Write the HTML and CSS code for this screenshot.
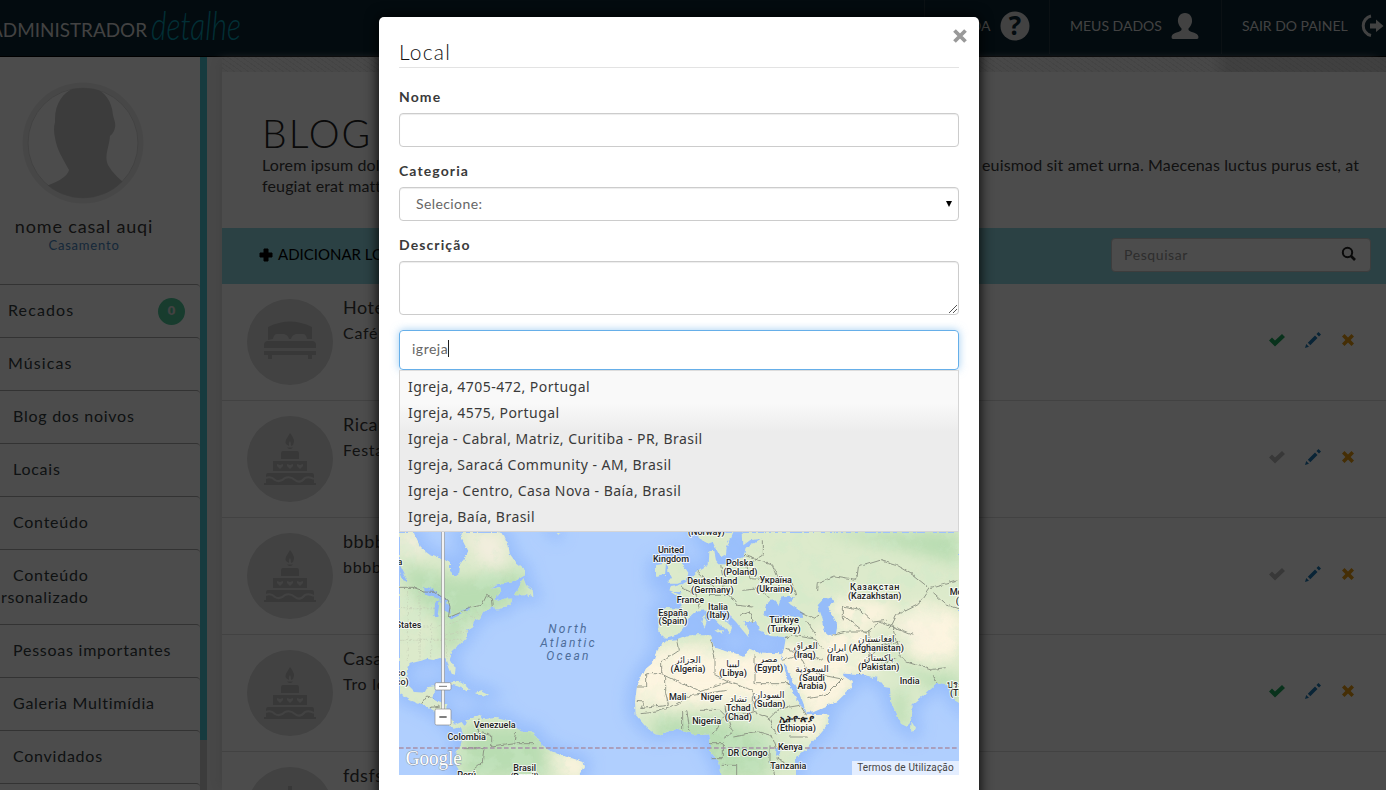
FILE: index.html
```html
<!DOCTYPE html>
<html lang="pt">
<head>
<meta charset="utf-8">
<title>Administrador</title>
<link rel="stylesheet" href="styles.css">
</head>
<body>
<svg width="0" height="0" class="defs">
  <symbol id="bed" viewBox="0 0 54 40"><path d="M5 20V7Q27-4 49 7V19H44Q43 14 40 14H33Q29 15 28 19H26Q25 15 21 14H14Q11 14 10 19ZM1 28V25Q1 21 5 21H49Q53 21 53 25V28ZM1 31H53V35H49V39H45V35H9V39H5V35H1Z"/></symbol>
  <symbol id="cake" viewBox="0 0 54 54"><path d="M27 2Q33 9 30 14L28 15Q28 11 27 10Q25 12 26 15Q20 12 24 7ZM24 16.500H30L28 18H26ZM18 28V22Q18 20 20 20H34Q36 20 36 22V28ZM10 40V30H44V40Z"/><path d="M3 52V44Q3 42 5 42H49Q51 42 51 44V52H53V54H1V52Z"/><g class="icing"><path d="M14 33l3 1 3-1v2l-3 3-3-3zM24 33l3 1 3-1v2l-3 3-3-3zM34 33l3 1 3-1v2l-3 3-3-3z"/><path class="wave" d="M3 47Q8 45 12 49Q17 52 22 47Q27 45 32 49Q37 53 42 47Q46 45 51 48"/></g></symbol>
  <symbol id="cross" viewBox="0 0 54 54"><path d="M25 4h4v4h5v3h-5v8h-4v-8h-5V8h5zM10 52V30l17-14 17 14v22z"/></symbol>
  <symbol id="ok" viewBox="0 0 16 16"><path d="M0 8.500L3 5.500L6 8.500L13 2L16 5L6 14.500Z"/></symbol>
  <symbol id="pen" viewBox="0 0 16 16"><path d="M0 16L1.200 12L4 14.800ZM2.800 10.700L10 3.500L12.500 6L5.300 13.200ZM11.500 2L13.500 0L16 2.500L14 4.500Z"/></symbol>
  <symbol id="del" viewBox="0 0 14 14"><path d="M3.500 1L7 4.400L10.500 1L13 3.500L9.600 7L13 10.500L10.500 13L7 9.600L3.500 13L1 10.500L4.400 7L1 3.500Z"/></symbol>
</svg>
<div class="page">
  <header class="top">
    <svg class="logo" width="260" height="56"><text class="brand" x="-10" y="37" textLength="157" lengthAdjust="spacingAndGlyphs">ADMINISTRADOR</text><text class="script" x="151" y="40" textLength="90" lengthAdjust="spacingAndGlyphs">detalhe</text></svg>
    <nav class="topnav">
      <a class="help"><span>AJUDA</span><svg width="30" height="30" viewBox="0 0 30 30"><circle cx="15" cy="15" r="14.500"/><text class="question" x="15" y="24" text-anchor="middle">?</text></svg></a>
      <a class="user"><span>MEUS DADOS</span><svg width="28" height="28" viewBox="0 0 28 28"><path d="M14 1C9 1 6.500 5 7 10C7.500 13 9 15 10.500 16.500V18C8 21 1 20 .5 25Q.5 27 2 27H26Q27.500 27 27.500 25C27 20 20 21 17.500 18V16.500C19 15 20.500 13 21 10C21.500 5 19 1 14 1Z"/></svg></a>
      <a class="exit"><span>SAIR DO PAINEL</span><svg width="26" height="24" viewBox="0 0 26 24"><path class="arc" d="M13 2A10 10 0 0 0 13 21.500"/><path d="M12 9.500H18V5.500L25.500 12L18 18V14.500H12Z"/></svg></a>
    </nav>
  </header>
  <div class="body">
    <aside class="side">
      <div class="profile">
        <svg width="122" height="122" viewBox="0 0 122 122"><circle cx="61" cy="61" r="60.500" fill="#efefef"/><circle cx="61" cy="61" r="55" fill="#fff" stroke="#ddd"/><clipPath id="face"><circle cx="61" cy="61" r="55"/></clipPath><path clip-path="url(#face)" fill="#cacaca" d="M33 40C31 -5 88-8 91 33C92 38 95 42 92 49Q90 53 88 54C87 66 82 74 86 83Q92 94 110 107V122H15V107Q45 98 47 88C40 75 35 68 33 56Q31 47 33 40Z"/></svg>
        <div class="couple">nome casal auqi</div><div class="type">Casamento</div>
      </div>
      <ul class="menu">
        <li class="near">Recados<b class="badge">0</b></li><li class="near">Músicas</li><li>Blog dos noivos</li><li>Locais</li><li>Conteúdo</li><li class="double">Conteúdo<br>personalizado</li><li>Pessoas importantes</li><li>Galeria Multimídia</li><li>Convidados</li><li></li>
      </ul>
    </aside>
    <div class="rail"><div class="thumb"></div></div>
    <main class="main">
      <div class="strip"></div>
      <section class="intro"><h1>BLOG</h1><div class="lead"><span>Lorem ipsum dolor</span><span class="tail">euismod sit amet urna. Maecenas luctus purus est, at</span></div><div class="lead">feugiat erat mattis</div></section>
      <div class="bar"><svg width="14" height="14" viewBox="0 0 14 14"><path d="M5 1H9V5H13V9H9V13H5V9H1V5H5Z" stroke="#000"/></svg><span class="add">ADICIONAR LOCAL</span><div class="search"><span>Pesquisar</span><svg width="16" height="16" viewBox="0 0 16 16"><circle cx="6.500" cy="6.500" r="4.700" fill="none" stroke="#222" stroke-width="2"/><path d="M10 10L14 14" stroke="#222" stroke-width="2.600"/></svg></div></div>
      <article class="row"><div class="disc"><svg class="bed"><use href="#bed"/></svg></div><div class="info"><h3>Hotel</h3><p>Café</p></div><div class="acts"><svg class="ok on"><use href="#ok"/></svg><svg class="pen"><use href="#pen"/></svg><svg class="del"><use href="#del"/></svg></div></article>
      <article class="row"><div class="disc"><svg class="cake"><use href="#cake"/></svg></div><div class="info"><h3>Ricardo</h3><p>Festa</p></div><div class="acts"><svg class="ok"><use href="#ok"/></svg><svg class="pen"><use href="#pen"/></svg><svg class="del"><use href="#del"/></svg></div></article>
      <article class="row"><div class="disc"><svg class="cake"><use href="#cake"/></svg></div><div class="info"><h3>bbbbb</h3><p>bbbbb</p></div><div class="acts"><svg class="ok"><use href="#ok"/></svg><svg class="pen"><use href="#pen"/></svg><svg class="del"><use href="#del"/></svg></div></article>
      <article class="row"><div class="disc"><svg class="cake"><use href="#cake"/></svg></div><div class="info"><h3>Casa</h3><p>Tro lo</p></div><div class="acts"><svg class="ok on"><use href="#ok"/></svg><svg class="pen"><use href="#pen"/></svg><svg class="del"><use href="#del"/></svg></div></article>
      <article class="row"><div class="disc"><svg class="cake"><use href="#cross"/></svg></div><div class="info"><h3>fdsfs</h3></div></article>
    </main>
  </div>
</div>
<div class="backdrop">
  <div class="modal">
    <svg class="close" width="14" height="14" viewBox="0 0 14 14"><path d="M1.500 1.500L12.500 12.500M12.500 1.500L1.500 12.500"/></svg>
    <h2>Local</h2>
    <label>Nome</label><div class="field"></div>
    <label>Categoria</label><div class="field select"><span>Selecione:</span><svg width="6" height="6" viewBox="0 0 6 6"><path d="M0 0H6L3 6Z"/></svg></div>
    <label>Descrição</label><div class="field area"><svg width="8" height="8" viewBox="0 0 8 8"><path d="M0 8L8 0M4 8L8 4" stroke="#555" stroke-width="1"/></svg></div>
    <div class="field focus"><span>igreja</span><i class="caret"></i></div>
    <ul class="options"><li>Igreja, 4705-472, Portugal</li><li>Igreja, 4575, Portugal</li><li>Igreja - Cabral, Matriz, Curitiba - PR, Brasil</li><li>Igreja, Saracá Community - AM, Brasil</li><li>Igreja - Centro, Casa Nova - Baía, Brasil</li><li>Igreja, Baía, Brasil</li></ul>
    <div class="map">
    <svg width="560" height="243" viewBox="0 3 1680 729">
      <defs>
        <path id="land" d="M0 3H45L50 20 65 50 85 65 110 75 150 90V120L165 135 178 125 180 100 195 80 205 60 195 40 185 20V3H295L312 10 325 40 330 70 345 90 375 115V130L340 150 290 160 270 172 300 165 304 180 280 205 300 210 312 200 340 200 335 215 300 235 285 235 283 225 250 240 240 262 220 270V285L205 295 200 320 180 340 160 355 150 380 167 410 165 428 155 425 145 400 140 382 120 378 100 384 80 380 60 388 30 395 22 420 25 460 45 480 75 482 85 465 108 462 105 480 95 500 120 512 142 520 142 550 165 578 185 570 195 585 203 565 240 548 250 562 290 558 330 568 345 590 370 600 405 602 425 640 450 655 490 672 520 680 550 690 555 705 540 732H190L165 695 170 660 183 640 190 610 182 585 165 590 150 585 120 548 90 530 60 515 30 505 0 485ZM345 190L360 160 370 138 378 160 398 175 400 195 380 190ZM138 458Q180 435 212 475L200 478Q170 455 138 458ZM228 483L245 478 267 488 250 494ZM470 3L485 3 475 8ZM893 3L903 25 923 35 938 30 948 50 963 78 978 70 980 45 990 28 1000 3ZM1028 3L1030 40 1050 25 1087 20 1040 50 1033 75 1008 85 983 97 958 97 948 85 943 60 928 60 926 100 893 120 873 140 843 160 813 165 808 175 843 190 845 233 783 230 776 240 775 300 798 320 833 310 850 290 860 265 888 240 913 235 933 250 960 277 988 300 983 312 993 300 996 285 970 260 950 230 963 225 988 250 1008 270 1028 295 1045 315 1050 300 1033 270 1075 270 1080 298 1110 312 1158 315 1153 345 1145 380 1158 402 1193 470 1220 543 1243 540 1313 510 1358 465 1358 450 1330 432 1328 420 1303 415 1278 385 1265 378 1275 395 1313 422 1383 430 1433 440 1453 465 1470 468 1473 510 1503 575 1523 585 1535 560 1538 520 1575 490 1613 455 1643 460 1663 500 1680 520V3ZM798 328L833 325 873 310 933 310 940 345 983 360 1033 375 1048 350 1083 365 1148 367 1153 410 1173 470 1193 505 1222 550 1288 548 1283 580 1223 650 1188 680V732H965L958 690 933 660V640L928 607 883 610 833 590 783 610 763 605 738 585 707 548 705 510 711 465 738 410 765 388 775 350ZM803 90L828 65 848 100 865 125 858 145 833 155 803 155 816 140 805 120ZM768 100L798 94 795 128 768 135ZM1535 570L1548 590 1542 602 1533 595ZM812 180L845 180 835 195ZM946 295L972 295 967 308ZM913 250L920 270 913 290 907 270Z"/>
        <clipPath id="landclip"><use href="#land"/></clipPath>
        <filter id="soft" x="-20%" y="-20%" width="140%" height="140%"><feGaussianBlur stdDeviation="22"/></filter>
        <filter id="fray" x="0" y="0" width="100%" height="100%"><feTurbulence baseFrequency=".045" numOctaves="4" seed="4"/><feDisplacementMap in="SourceGraphic" scale="10" xChannelSelector="R" yChannelSelector="G"/></filter>
        <filter id="mottle" x="0" y="0" width="100%" height="100%"><feTurbulence type="fractalNoise" baseFrequency=".018" numOctaves="5" seed="8"/><feColorMatrix values="0 0 0 0 .62  0 0 0 0 .83  0 0 0 0 .60  0 6 0 0 -3"/></filter>
      </defs>
      <rect width="1680" height="740" fill="#b0cffe"/>
      <use href="#land" fill="#93bafb" stroke="#93bafb" stroke-width="42" filter="url(#soft)" opacity=".8"/>
      <g filter="url(#fray)">
        <g clip-path="url(#landclip)">
          <rect width="1680" height="740" fill="#dceacb"/>
          <g filter="url(#soft)">
            <path fill="#b9ddb2" d="M0 90L180 140 380 110 380 200 160 300 40 200ZM120 300H190V350H120ZM190 580H440V740H180ZM760 560H930L1110 610V740H930L760 630ZM1250 0H1680V100L1500 50ZM1450 370L1600 430 1680 430V530ZM1480 480H1520V590H1480Z"/>
            <path fill="#fdf4df" d="M700 400L800 350 1130 365 1170 500 1080 510 700 520ZM1130 330L1250 370 1320 400 1370 470 1240 560ZM1230 290L1400 290 1430 440 1300 400ZM1480 260L1560 220 1680 250V370L1560 390ZM1170 560L1290 545 1220 660ZM1290 205L1480 210 1460 280 1320 280ZM460 670H560V740H500Z"/>
            <path fill="#f3eede" d="M0 3H60L80 75 0 60ZM190 0H310L320 110 250 100ZM1500 270L1620 280 1600 350 1520 320Z"/>
          </g>
          <rect width="1680" height="740" filter="url(#mottle)" opacity=".3"/>
          <path fill="#fdf5e1" opacity=".65" filter="url(#soft)" d="M720 400L800 350 1130 370 1170 500 720 510ZM1140 340L1250 380 1360 460 1230 540ZM1490 260L1580 230 1680 260V350L1560 380Z"/>
          <path fill="#95bcf9" d="M75 165L110 180 145 205 135 215 110 198 78 188ZM103 255L105 215 122 208 115 255ZM126 208L150 220 152 245 132 235ZM145 257L180 242 185 248 155 262ZM180 237L210 228 208 236ZM0 100L25 150 10 145 0 120ZM1093 250L1103 215 1123 205 1138 222 1148 195 1188 195 1168 215 1213 245 1208 258 1158 255 1123 264ZM1253 220L1273 198 1298 200 1303 213 1283 225 1298 250 1313 280 1308 307 1283 310 1273 290 1268 260ZM1130 650L1142 650 1138 675 1128 670Z"/>
        </g>
        <path class="border" d="M0 169H42L75 180 105 181 145 205 150 225 145 257 185 240 210 228 245 220 260 190 277 200 280 225M65 515L80 495 100 500M90 530L120 525M190 650L255 650 250 690 220 715M240 560L235 600 275 610 275 645 310 640 345 635 350 600M350 635H405M783 245L850 252M843 165L890 190 900 230M893 120L955 180 975 160 965 100M930 190H990L1015 220 1060 225M1035 70L1090 90 1120 100 1135 140 1180 155 1190 190M1090 25V70L1040 100 1050 140 1130 145M1030 175L1080 170 1110 200M1020 250L1050 240 1060 270M1158 320L1180 310 1240 320 1270 350M1200 240L1240 260 1260 250M1220 270L1250 310M1155 350L1210 370 1270 385M1150 385L1200 370 1220 410 1270 430 1320 440M1225 500L1280 490 1330 440M1300 310L1340 300 1410 300V380L1380 430M1400 380L1450 340 1500 330M1253 180L1255 155 1305 135 1370 145 1375 105 1440 85 1490 100 1540 130 1590 170 1560 215 1490 250 1470 290M1330 265V225L1380 235 1420 270 1460 265M1330 250L1400 305 1440 270 1540 310M1480 280L1500 370 1520 390 1600 415 1640 410M1440 400L1490 380M1590 170L1680 145M1600 185L1640 220 1680 230M1600 430L1610 455M833 325L838 355 785 390V425L900 480 985 450 1060 475M933 325L945 380V430L985 450M1065 370V455H1170M711 465H740V425H785M797 430V485L805 520 725 530 735 510 710 508M725 545L770 540 830 520 880 490 983 475M1060 475V540L980 560 975 520M860 535L870 600M848 540V600M900 535L960 535 975 550 940 610M975 530L1000 600 970 620M1000 615L1080 600 1115 610 1130 650M1060 540L1110 560 1130 610M1110 560L1140 530 1200 520 1220 550M1170 615H1225M930 635H970V680L935 680M965 700H1010V732M1110 640V690L1125 732M1130 680L1190 710"/>
        <path class="states" d="M0 230H110M0 285H90M0 325H190M25 180V390M60 180V385M95 280V380M130 280L145 380M100 290L200 260M120 310L205 300M190 235L230 265M215 225L245 255"/>
      </g>
      <path d="M0 651H1680" class="equator"/>
      <g class="labels">
        <text x="10" y="102" text-anchor="end">ada</text><text x="67" y="291" text-anchor="end">United States</text><text x="20" y="435" text-anchor="end">México</text><text x="29" y="462" text-anchor="end">(Mexico)</text><text x="287" y="590">Venezuela</text><text x="203" y="627">Colombia</text><text x="377" y="720">Brasil</text><text x="377" y="747">(Brazil)</text><text x="203" y="740">Perú</text>
        <text x="922" y="13">(Norway)</text><text x="816" y="66">United</text><text x="816" y="93">Kingdom</text><text x="1022" y="105">Polska</text><text x="1024" y="132">(Poland)</text><text x="940" y="159">Deutschland</text><text x="940" y="186">(Germany)</text><text x="1130" y="156">Україна</text><text x="1127" y="183">(Ukraine)</text><text x="874" y="216">France</text><text x="957" y="236">Italia</text><text x="957" y="261">(Italy)</text><text x="822" y="255">España</text><text x="822" y="279">(Spain)</text><text x="1155" y="276">Türkiye</text><text x="1155" y="303">(Turkey)</text><text x="1427" y="178" textLength="148">Қазақстан</text><text x="1427" y="204">(Kazakhstan)</text><text x="1652" y="192" text-anchor="start">Монгол</text><text x="1670" y="219" text-anchor="start">(Mongolia)</text>
        <text x="867" y="395" textLength="76">الجزائر</text><text x="867" y="422">(Algeria)</text><text x="1002" y="407">ليبيا</text><text x="1002" y="435">(Libya)</text><text x="1109" y="393">مصر</text><text x="1109" y="420">(Egypt)</text><text x="1220" y="354">العراق</text><text x="1217" y="381">(Iraq)</text><text x="1313" y="361">ايران</text><text x="1316" y="389">(Iran)</text><text x="1432" y="334">افغانستان</text><text x="1432" y="360">(Afghanistan)</text><text x="1439" y="390">پاکستان</text><text x="1439" y="416">(Pakistan)</text><text x="1239" y="422">السعودية</text><text x="1239" y="450">(Saudi</text><text x="1239" y="474">Arabia)</text><text x="1532" y="459">India</text><text x="1643" y="472" text-anchor="start">ประเทศ</text><text x="1653" y="496" text-anchor="start">(Thailand)</text>
        <text x="836" y="507">Mali</text><text x="938" y="507">Niger</text><text x="1018" y="513">تشاد</text><text x="1018" y="540">Tchad</text><text x="1018" y="567">(Chad)</text><text x="1110" y="501">السودان</text><text x="1112" y="528">(Sudan)</text><text x="923" y="579">Nigeria</text><text class="ethiopic" x="1192" y="573" textLength="104" lengthAdjust="spacingAndGlyphs">ኢትዮጵያ</text><text x="1192" y="600">(Ethiopia)</text><text x="1174" y="657">Kenya</text><text x="1046" y="675">DR Congo</text><text x="1168" y="714">Tanzania</text>
      </g>
      <g class="ocean"><text x="505" y="306" textLength="114">North</text><text x="505" y="348" textLength="163">Atlantic</text><text x="505" y="388" textLength="127">Ocean</text></g>
      <text class="google" x="20" y="701" textLength="168" lengthAdjust="spacingAndGlyphs">Google</text>
      <g class="zoomer"><path d="M128 0H136V540H128Z"/><rect x="108" y="455" width="48" height="22" rx="4"/><rect x="108" y="534" width="48" height="48" rx="5"/><path class="thin" d="M120 466H144"/><path class="dash" d="M121 558H143"/></g>
    </svg>
    <span class="terms">Termos de Utilização</span>
    </div>
  </div>
</div>
</body>
</html>
```
FILE: styles.css
```css
* { box-sizing: border-box; }
body { margin: 0; width: 1386px; height: 790px; overflow: hidden; font: 16px/21px Lato, "Open Sans", sans-serif; color: #3a3a3a; }
h1, h2, h3, p, ul { margin: 0; padding: 0; font-weight: 400; list-style: none; }
svg { display: block; flex: none; }
.defs { position: absolute; }
.page { height: 790px; overflow: hidden; background: #f0f0f0; }
.top { display: flex; justify-content: space-between; height: 57px; background: #0a2532; border-bottom: 1px solid #000; }
.brand { font: 20px Lato; fill: #ddd; }
.script { font: italic 300 40px Lato; fill: #079db4; }
.topnav { display: flex; font-size: 14px; color: #ddd; }
.topnav a { display: flex; align-items: center; height: 54px; border-left: 1px solid #253a43; padding-left: 20px; }
.topnav span { margin-top: -4px; white-space: nowrap; }
.topnav svg { fill: #ddd; margin-top: -2px; }
.help { width: 125px; }
.help span { width: 45px; text-align: right; margin-right: 10px; }
.user { width: 172px; }
.user span { width: 91px; margin-right: 10px; }
.exit { width: 165px; }
.exit span { width: 105px; margin-right: 11px; }
.exit svg { margin-left: 0; }
.arc { fill: none; stroke: #ddd; stroke-width: 3; }
.question { font: bold 26px "Open Sans"; fill: #0a2532; }
.body { display: flex; height: 733px; }
.side { width: 200px; background: #fff; overflow: hidden; }
.profile { height: 227px; padding-top: 25px; text-align: center; }
.profile svg { margin-left: 22px; }
.couple { font-size: 18px; line-height: 24px; margin-top: 10px; letter-spacing: .85px; width: 168px; }
.type { color: #4a86c0; font-size: 13px; line-height: 14px; width: 168px; letter-spacing: .8px; }
.menu li { height: 53px; border-top: 1px solid #aaa; border-top-right-radius: 4px; padding: 14px 15px 0 13px; line-height: 22px; letter-spacing: .75px; color: #343c40; display: flex; justify-content: space-between; white-space: nowrap; }
.menu .near { padding-left: 8px; }
.menu .near { letter-spacing: 1.1px; }
.menu .double { display: block; height: 75px; padding-left: 0; margin-left: -18px; text-indent: 31px; }
.badge { width: 27px; height: 27px; margin-top: -1px; border-radius: 50%; background: #51c99c; color: #ddd; text-align: center; letter-spacing: 0; font: bold 12px/27px "DejaVu Sans"; }
.rail { width: 7px; background: #c8c8c8; }
.thumb { height: 683px; background: #4dc5d2; }
.main { flex: 1; margin-left: 15px; background: #fff; box-shadow: -6px 0 10px -4px #ddd; }
.strip { height: 15px; background: repeating-linear-gradient(35deg, #0000 0 3px, #0000000c 3px 4px), linear-gradient(90deg, #f0f0f0 990px, #d8d8d8 1005px); }
.intro { height: 156px; padding: 40px 0 0 40px; }
h1 { font-size: 39px; line-height: 42px; letter-spacing: 2px; font-weight: 300; color: #222; }
.lead { display: grid; grid-template-columns: 720px auto; white-space: nowrap; letter-spacing: .14px; }
.bar { height: 56px; background: #8fd9e3; display: flex; align-items: center; padding: 0 15px 3px 37px; color: #000; }
.add { font-size: 15px; margin-left: 5px; }
.search { margin-left: auto; width: 260px; height: 34px; border: 1px solid #ccc; border-radius: 4px; background: #fff; display: flex; align-items: center; justify-content: space-between; padding: 0 13px 1px 12px; font-size: 14px; color: #999; letter-spacing: .6px; }
.row { height: 117px; border-bottom: 1px solid #ddd; display: flex; padding: 15px 31px 0 25px; }
.disc { width: 86px; height: 86px; border-radius: 50%; background: #ddd; display: grid; place-items: center; margin-right: 10px; }
.disc svg { fill: #bbb; width: 54px; height: 54px; }
.disc .bed { height: 40px; margin-top: -4px; }
.disc .cake { margin-top: -3px; }
.icing { fill: #ddd; }
.wave { fill: none; stroke: #ddd; stroke-width: 2; }
.info h3 { font-size: 18px; line-height: 22px; margin-top: -3px; letter-spacing: .5px; }
.info p { margin-top: 4px; letter-spacing: .7px; }
.acts { margin: 33px 0 0 auto; display: flex; align-items: center; gap: 20px; height: 16px; }
.acts svg { width: 16px; height: 16px; fill: #bbb; }
.acts .on { fill: #1fa85e; }
.acts .pen { fill: #1e78b4; }
.acts .del { fill: #e69a12; width: 14px; height: 14px; }
.backdrop { position: absolute; inset: 0; background: rgba(0,0,0,.7); overflow: hidden; }
.modal { position: relative; width: 600px; height: 820px; margin: 17px 0 0 379px; padding: 20px; background: #fff; border-radius: 5px; box-shadow: 0 0 14px #000; }
.close { position: absolute; right: 12px; top: 12px; }
.close path { stroke: #999; stroke-width: 3.800; }
h2 { height: 31px; border-bottom: 1px solid #e3e3e3; font-size: 21px; line-height: 29px; font-weight: 300; letter-spacing: 1.2px; margin-bottom: 19px; color: #111; }
label { display: block; font: bold 14px/20px Lato; letter-spacing: 1.1px; margin-bottom: 6px; }
.field { height: 34px; border: 1px solid #ccc; border-radius: 4px; margin-bottom: 14px; box-shadow: inset 0 1px 1px rgba(0,0,0,.075); display: flex; align-items: center; font-size: 14px; color: #666; padding: 0 6px 1px 16px; letter-spacing: .4px; }
.select { justify-content: space-between; }
.area { height: 54px; margin-bottom: 15px; align-items: end; justify-content: end; padding: 0 1px 1px; }
.focus { height: 40px; margin: 0; padding: 0 0 3px 12px; border-color: #66afe9; box-shadow: 0 0 8px rgba(102,175,233,.6); letter-spacing: .5px; }
.caret { width: 1px; height: 17px; background: #222; }
.options { height: 162px; padding: 3px 8px; border: 1px solid #d5d5d5; border-top-color: #ddd; background: linear-gradient(#f9f9f9 20%, #ececec 38%); font: 14px/26px "Noto Sans", sans-serif; letter-spacing: .46px; color: #3a3a3a; }
.map { display: grid; width: 560px; height: 243px; overflow: hidden; }
.map > * { grid-area: 1/1; }
.terms { place-self: end; width: 107px; height: 14px; background: rgba(245,248,255,.75); font: 10px/14px Roboto; text-align: center; color: #444; white-space: nowrap; letter-spacing: .15px; }
.labels text { font: 500 27px Roboto, "DejaVu Sans", sans-serif; text-anchor: middle; fill: #222; stroke: #fff; stroke-width: 6px; stroke-opacity: .75; stroke-linejoin: round; paint-order: stroke; }
.labels text[text-anchor="start"] { text-anchor: start; }
.labels text[text-anchor="end"] { text-anchor: end; }
.labels .ethiopic { font-weight: 700; stroke-width: 2px; }
.ocean { font: italic 36px Roboto; text-anchor: middle; fill: #4d6d9a; }
.border { fill: none; stroke: #858b7d; stroke-width: 2.600; }
.states { fill: none; stroke: #c4cbb5; stroke-width: 2; stroke-dasharray: 6 4; }
.equator { stroke: #a890a8; stroke-width: 5; stroke-dasharray: 14 7; }
.google { font: 62px "Liberation Serif"; fill: #fff; stroke: #8894a4; stroke-width: 3; paint-order: stroke; }
.zoomer { fill: #fff; stroke: #888; stroke-width: 2; }
.zoomer .thin { stroke: #777; stroke-width: 3; }
.zoomer .dash { stroke: #666; stroke-width: 5; }
```
